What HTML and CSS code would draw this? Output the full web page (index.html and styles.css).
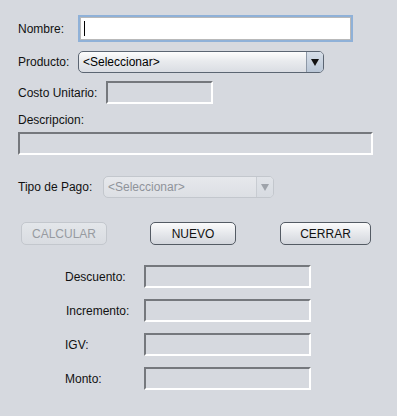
FILE: index.html
```html
<!DOCTYPE html>
<html>
<head>
  <title>Venta</title>
  <link rel="stylesheet" href="styles.css">
</head>
<body>

  <div class="form">
    <div class="row row-name">
      <label class="lbl lbl-name">Nombre:</label>
      <div class="input focus"><span class="caret"></span></div>
    </div>

    <div class="row row-product">
      <label class="lbl lbl-product">Producto:</label>
      <div class="combo combo-product">
        <span class="combo-text">&lt;Seleccionar&gt;</span>
        <span class="combo-arrow"><span class="tri"></span></span>
      </div>
    </div>

    <div class="row row-cost">
      <label class="lbl lbl-cost">Costo Unitario:</label>
      <div class="box box-cost"></div>
    </div>

    <label class="lbl lbl-desc">Descripcion:</label>
    <div class="box box-desc"></div>

    <div class="row row-pay">
      <label class="lbl lbl-pay">Tipo de Pago:</label>
      <div class="combo combo-pay disabled">
        <span class="combo-text">&lt;Seleccionar&gt;</span>
        <span class="combo-arrow"><span class="tri"></span></span>
      </div>
    </div>

    <div class="buttons">
      <button class="btn btn-calc" disabled>CALCULAR</button>
      <button class="btn btn-new">NUEVO</button>
      <button class="btn btn-close">CERRAR</button>
    </div>

    <div class="totals">
      <label class="lbl">Descuento:</label>
      <div class="box"></div>
      <label class="lbl lbl-inc">Incremento:</label>
      <div class="box"></div>
      <label class="lbl">IGV:</label>
      <div class="box"></div>
      <label class="lbl">Monto:</label>
      <div class="box"></div>
    </div>
  </div>

</body>
</html>
```

FILE: styles.css
```css
body {
  margin: 0;
  background-color: #d6d9df;
  font-family: "Liberation Sans", Arial, sans-serif;
  font-size: 12px;
  color: #000;
}

.form {
  padding: 15px 0 0 18px;
  width: 379px;
}

.row {
  display: flex;
  align-items: center;
}

.lbl {
  display: block;
  color: #111;
}

/* name field */
.lbl-name {
  width: 60px;
}

.input {
  box-sizing: border-box;
  width: 275px;
  height: 27px;
  background: #fff;
  border: 1px solid #a5a8ad;
  position: relative;
}

.input.focus {
  border: 2px solid #8fb1d8;
  box-shadow: inset 0 0 0 1px #b9b9b9;
}

.caret {
  position: absolute;
  left: 4px;
  top: 4px;
  width: 1px;
  height: 15px;
  background: #000;
}

/* combos */
.row-product {
  margin-top: 9px;
}

.lbl-product {
  width: 60px;
}

.combo {
  box-sizing: border-box;
  height: 22px;
  display: flex;
  border: 1px solid #5b6572;
  border-radius: 5px;
  background: linear-gradient(#fdfdfd, #e9ebee 45%, #dadde3);
  overflow: hidden;
}

.combo-product {
  width: 246px;
}

.combo-text {
  flex: 1;
  padding-left: 4px;
  line-height: 20px;
}

.combo-arrow {
  width: 16px;
  border-left: 1px solid #8d98a6;
  background: linear-gradient(#d7dfe9, #b9c6d6);
  display: flex;
  align-items: center;
  justify-content: center;
}

.tri {
  width: 0;
  height: 0;
  border-left: 4px solid transparent;
  border-right: 4px solid transparent;
  border-top: 7px solid #111;
}

.combo.disabled {
  border-color: #c3c7cd;
  background: linear-gradient(#e6e8ec, #dcdfe4);
}

.combo.disabled .combo-text {
  color: #8f939a;
}

.combo.disabled .combo-arrow {
  border-left-color: #c8ccd2;
  background: linear-gradient(#e0e3e8, #d7dbe1);
}

.combo.disabled .tri {
  border-top-color: #9ea3aa;
}

/* sunken read-only boxes */
.box {
  box-sizing: border-box;
  height: 23px;
  border-top: 2px solid #75787d;
  border-left: 2px solid #75787d;
  border-right: 2px solid #fff;
  border-bottom: 2px solid #fff;
}

.row-cost {
  margin-top: 8px;
}

.lbl-cost {
  width: 88px;
}

.box-cost {
  width: 107px;
}

.lbl-desc {
  margin-top: 9px;
  line-height: 14px;
}

.box-desc {
  width: 355px;
  margin-top: 5px;
}

.row-pay {
  margin-top: 21px;
}

.lbl-pay {
  width: 85px;
}

.combo-pay {
  width: 171px;
}

/* buttons */
.buttons {
  display: flex;
  margin-top: 24px;
  width: 350px;
  justify-content: space-between;
  padding-left: 3px;
}

.btn {
  box-sizing: border-box;
  height: 23px;
  border: 1px solid #545b64;
  border-radius: 5px;
  background: linear-gradient(#fbfbfc, #e6e8ec 50%, #d3d6dc);
  font-family: "Liberation Sans", Arial, sans-serif;
  font-size: 12px;
  color: #111;
  padding: 0;
}

.btn-calc {
  width: 86px;
  border-color: #c3c7cd;
  background: linear-gradient(#e3e6ea, #d9dce1);
  color: #979ba1;
}

.btn-new {
  width: 86px;
  margin-left: 43px;
}

.btn-close {
  width: 91px;
  margin-left: auto;
}

/* totals */
.totals {
  display: grid;
  grid-template-columns: 79px 167px;
  grid-auto-rows: 23px;
  row-gap: 11px;
  align-items: center;
  margin: 20px 0 0 47px;
}

.totals .box {
  width: 167px;
}

.lbl-inc {
  padding-left: 1px;
}
```
